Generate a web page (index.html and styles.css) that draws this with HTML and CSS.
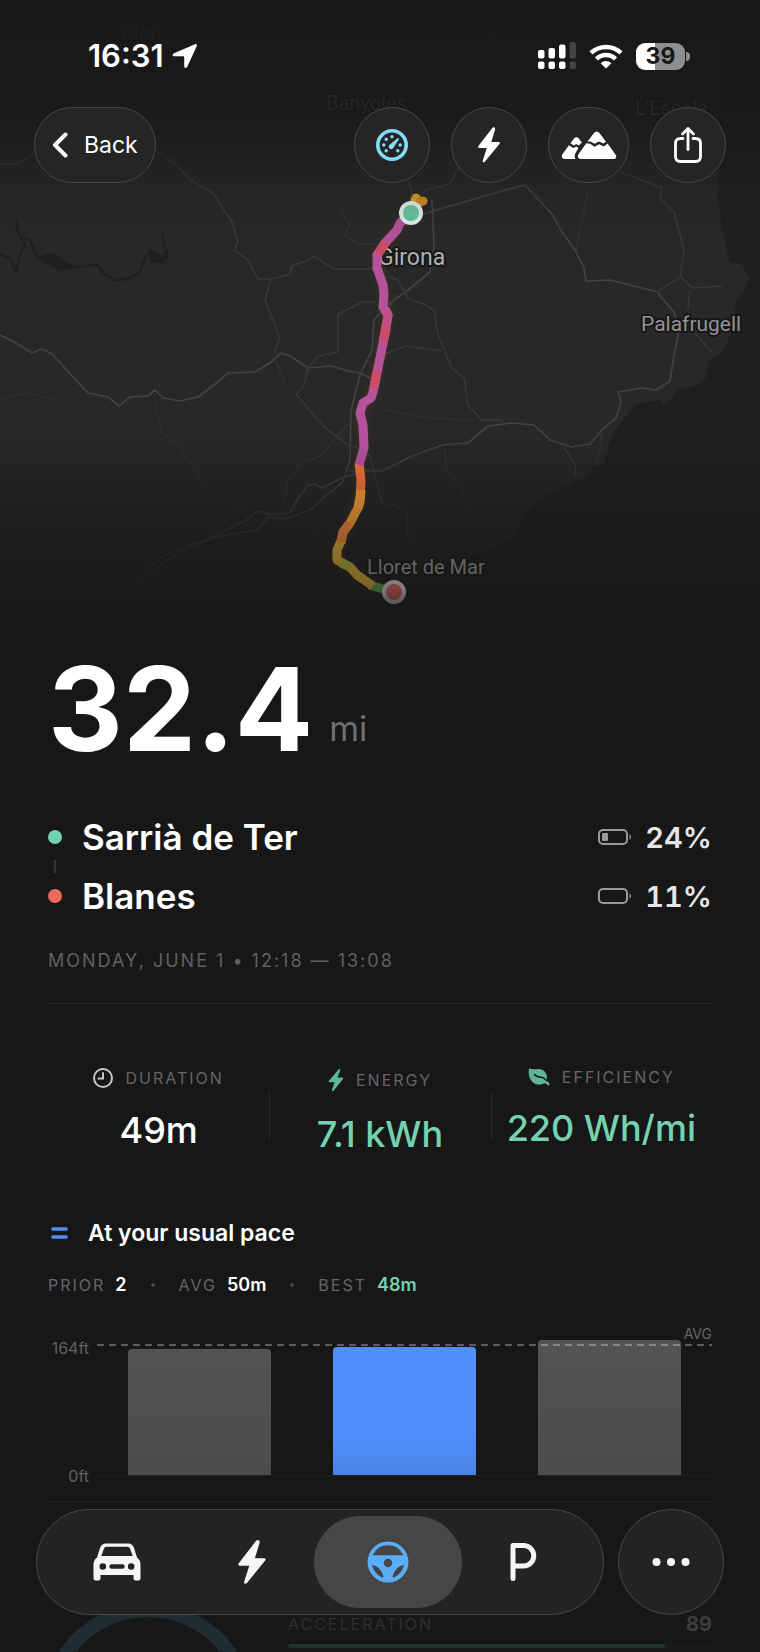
FILE: index.html
```html
<!DOCTYPE html>
<html lang="en">
<head>
  <meta charset="UTF-8">
  <meta name="viewport" content="width=device-width, initial-scale=1.0">
  <title>Drive Details</title>
  <link rel="stylesheet" href="styles.css">
</head>
<body>
  <svg class="map" viewBox="0 0 760 640" preserveAspectRatio="xMidYMin slice" role="img" aria-label="Route map">
    <defs>
      <linearGradient id="fade" x1="0" y1="0" x2="0" y2="1">
        <stop offset="0" stop-color="#181818" stop-opacity="0.97"/>
        <stop offset="0.17" stop-color="#181818" stop-opacity="0.9"/>
        <stop offset="0.24" stop-color="#181818" stop-opacity="0.55"/>
        <stop offset="0.3" stop-color="#181818" stop-opacity="0.15"/>
        <stop offset="0.38" stop-color="#181818" stop-opacity="0"/>
        <stop offset="0.68" stop-color="#171717" stop-opacity="0"/>
        <stop offset="0.92" stop-color="#171717" stop-opacity="0.45"/>
        <stop offset="0.97" stop-color="#171717" stop-opacity="0.9"/>
        <stop offset="1" stop-color="#171717" stop-opacity="1"/>
      </linearGradient>
      <linearGradient id="landFade" x1="0" y1="0" x2="0" y2="1">
        <stop offset="0.68" stop-color="#191919" stop-opacity="0"/>
        <stop offset="0.9" stop-color="#191919" stop-opacity="0.75"/>
        <stop offset="1" stop-color="#171717" stop-opacity="1"/>
      </linearGradient>
      <filter id="glow" x="-50%" y="-20%" width="200%" height="140%">
        <feGaussianBlur stdDeviation="5"/>
      </filter>
    </defs>
    <rect width="760" height="640" fill="#282828"/>
    <!-- sea -->
    <path fill="#1f1f1f" d="M722 0L718 200L722 230L730 262L742 264L749 278L744 292L734 304L736 318L730 336L724 350L708 362L706 378L694 386L678 390L670 400L665 406L660 400L640 403L634 406L622 422L612 434L608 448L604 464L592 468L590 476L578 480L560 490L538 500L524 516L516 532L502 544L490 550L470 558L445 566L415 580L400 592L375 610L340 640H760V0Z"/>
    <!-- reservoir -->
    <g fill="none" stroke="#1f1f1f" stroke-width="2.400" stroke-linejoin="round">
      <path d="M0 254L10 258L16 272L21 252L25 245L18 232L16 220M19 236L30 240L36 255L46 262L78 267L97 265L105 275L115 280L128 279L140 272L146 256L152 250L158 256L168 258L164 242L162 232"/>
      <path fill="#1f1f1f" stroke-width="1" d="M38 257L52 253L66 262L78 267L60 271Z"/>
      <path fill="#1f1f1f" stroke-width="1" d="M148 251L158 256L168 251L163 263L152 262Z"/>
    </g>
    <g fill="none" stroke="#424242" stroke-width="1.700" stroke-linejoin="round">
      <path d="M0 335L16 343L32 353L42 349L52 354L74 378L84 389L88 393L108 397L119 406L130 397L148 396L155 390L163 398L180 401L198 397L214 385L228 373L255 372L270 363L281 353L290 356L308 368L332 366L348 371L360 373L372 379"/>
      <path d="M115 602L160 558L180 548L206 540L246 520L258 511L270 514L290 513L298 498L308 485L315 484L322 488L342 478L366 470L382 471L412 456L443 445L468 443L488 426L512 423L534 425L550 440L572 447L590 444L602 430L616 418L621 402L618 392L642 388L656 390L670 381L674 355L679 330L674 312L660 296L658 292L610 280L586 281L584 268L575 250L562 232L552 214L525 185L505 190L440 209L408 219"/>
      <path d="M115 606L162 564L180 551L216 537L257 530L269 517L285 519L310 510L328 494L342 483L350 460L351 410L360 375L372 350L374 320L386 306L408 290L430 272L434 245L432 200"/>
    </g>
    <g fill="none" stroke="#383838" stroke-width="1.600" stroke-linejoin="round">
      <path d="M0 164H18L40 148M152 148L176 164L190 180L212 192L232 222L238 242L234 250L248 260L258 279H271L265 300L272 318L280 338L275 352"/>
      <path d="M271 279L290 274L292 266L306 261L314 256L334 269H378M308 368L318 356L338 352V314L362 302H376M308 368L303 388L296 394L324 427L348 445L358 448L370 456L375 475L382 503L398 506L407 514V532L415 550L424 570"/>
      <path d="M348 471H380M408 210L412 190L402 170L408 150M412 204L426 190L450 184L462 162M620 172L652 184L662 188L660 198L674 212L684 250L680 278L664 287L658 292M680 276L692 288L722 286M690 290L688 310M694 332L712 352M564 447L576 466L575 475"/>
      <path d="M388 276L398 280L408 298L425 305L434 310L438 335L452 368L464 378L468 405L482 420H504M385 354L405 346L442 351M396 295L390 306"/>
      <path d="M588 192L576 250M340 210L350 224L345 235L358 244H378M602 430L600 450L596 464" opacity=".6"/>
      <path d="M154 400L162 432L180 448L195 470L202 486L224 496L244 510M276 360L284 384M0 400L10 396L30 393L60 402M384 410L430 418L470 420M445 448L446 468L462 490L470 510M340 565L332 580V595M308 514L318 540" opacity=".5"/>
      <path d="M282 508L288 480L300 464L320 456L350 422M500 0L492 70" opacity=".6"/>
    </g>
    <rect width="760" height="640" fill="url(#landFade)"/>
    <g class="place">
      <text x="121" y="39" font-size="19">Olot</text>
      <text x="326" y="110" font-size="20">Banyoles</text>
      <text x="635" y="115" font-size="20">L'Escala</text>
      <text class="place-near" x="378" y="265" font-size="23">Girona</text>
      <text x="641" y="331" font-size="21">Palafrugell</text>
      <text x="367" y="574" font-size="20">Lloret de Mar</text>
    </g>
    <path class="route-glow" filter="url(#glow)" d="M411 213L397 230L377 255L384 295L388 315L371 398L360 413L364 448L359 465L360 497L341 542L337 560L370 585L394 592"/>
    <g fill="none" stroke-width="9" stroke-linejoin="round">
      <path stroke="#d3a52c" stroke-linecap="round" d="M411 213L416 198"/>
      <path stroke="#dc8427" stroke-linecap="round" d="M420 202L423 201"/>
      <path stroke="#4f9a3e" d="M369 585L394 592"/>
      <path stroke="#c9a035" d="M341 541L337 550V560L350 567L357 575L373 586"/>
      <path stroke="#a3a838" d="M341 563L350 567"/>
      <path stroke="#e0932f" d="M360 497L358 508L350 523L343 532L341 543"/>
      <path stroke="#dc7c36" d="M350 523L343 532L341 542"/>
      <path stroke="#ec7038" d="M359 463L361 480L360 498"/>
      <path stroke="#ec9434" d="M361 490L360 502L358 508"/>
      <path stroke="#b5529a" d="M411 213L400 223L397 230L385 243L377 255V268L383 285L384 295L383 307L388 315L385 333L379 363L373 392L371 398L363 403L360 413L363 425L364 448L359 465"/>
      <path stroke="#c04f84" d="M385 309L388 315L383 343"/>
      <path stroke="#cb4c64" d="M386 242L378 254M386 329L384 338M377 371L374 388"/>
    </g>
    <circle cx="411" cy="213" r="10" fill="#68c8a1" stroke="#e4f3ec" stroke-width="4"/>
    <circle cx="394" cy="592" r="10" fill="#d8605a" stroke="#d5cccc" stroke-width="4"/>
    <rect width="760" height="640" fill="url(#fade)"/>
  </svg>

  <div class="status">
    <div class="status-time">
      <span>16:31</span>
      <svg width="26" height="26" viewBox="0 0 26 26" fill="#fff" aria-hidden="true"><path d="M23 1.2L2 10.2C0 11.2.4 13.2 2.4 13.3H11.2Q12.2 13.3 12.2 14.4V23C12.3 25.2 14.5 25.6 15.4 23.6L24.7 3.2C25.3 1.7 24.5.6 23 1.2Z"/></svg>
    </div>
    <div class="status-icons">
      <svg width="38" height="28" viewBox="0 0 38 28" fill="#fff" aria-hidden="true">
        <rect y="8" width="6.500" height="8.500" rx="2"/><rect x="10.500" y="6" width="6.500" height="10.500" rx="2"/><rect x="21" y="2.500" width="6.500" height="14" rx="2"/><rect x="31.500" y="0" width="6.500" height="16.500" rx="2" fill="#444"/>
        <rect y="19.500" width="6.500" height="7.500" rx="2"/><rect x="10.500" y="19.500" width="6.500" height="7.500" rx="2"/><rect x="21" y="19.500" width="6.500" height="7.500" rx="2"/><rect x="31.500" y="19.500" width="6.500" height="7.500" rx="2" fill="#444"/>
      </svg>
      <svg width="34" height="26" viewBox="0 0 34 26" fill="none" stroke="#fff" stroke-width="4.500" aria-hidden="true">
        <path d="M2 10A21.500 21.500 0 0 1 32 10M7.500 16A13.500 13.500 0 0 1 26.500 16"/>
        <path fill="#fff" stroke="none" d="M17 25.500L11.600 20.200A8 8 0 0 1 22.400 20.200Z"/>
      </svg>
      <div class="phone-battery">39</div>
    </div>
  </div>

  <header class="toolbar">
    <button class="glass back" type="button">
      <svg width="16" height="26" viewBox="0 0 16 26" fill="none" stroke="#fff" stroke-width="4" stroke-linecap="round" stroke-linejoin="round" aria-hidden="true"><path d="M13.500 2.500L3 13L13.500 23.500"/></svg>
      Back
    </button>
    <button class="glass round" type="button" aria-label="Speed">
      <svg width="32" height="32" viewBox="0 0 32 32" aria-hidden="true">
        <circle cx="16" cy="16" r="14.200" fill="none" stroke="#83dcfb" stroke-width="3.600"/>
        <g fill="#83dcfb"><circle cx="16" cy="7.700" r="1.700"/><circle cx="10.200" cy="10.200" r="1.700"/><circle cx="7.800" cy="16" r="1.700"/><circle cx="24.200" cy="16" r="1.700"/><circle cx="10.200" cy="21.800" r="1.700"/><circle cx="21.800" cy="21.800" r="1.700"/>
        <path d="M22.600 9.200Q22 8.800 21.200 9.500L14 15.500A2.500 2.500 0 1 0 17.600 18.500L22.800 10.600Q23.300 9.700 22.600 9.200Z"/></g>
      </svg>
    </button>
    <button class="glass round" type="button" aria-label="Power">
      <svg width="24" height="36" viewBox="0 0 24 36" fill="#fff" aria-hidden="true"><path d="M15.300 1L1.400 19Q.4 20.800 2.200 21H9.800L5.800 33.500C5.200 35.500 7 36 8.100 34.600L22.400 17Q23.700 15.200 21.600 15H14.300L18.100 2.600C18.600.6 16.500-.4 15.300 1Z"/></svg>
    </button>
    <button class="glass round wide" type="button" aria-label="Elevation">
      <svg width="56" height="30" viewBox="0 0 56 30" fill="#fff" aria-hidden="true">
        <path d="M26.500 11.500L33 3Q35.700-.2 38.400 3L45 11.700L42.500 13.600L37.800 11.400L33.500 13.800L29.500 11.500Z"/>
        <path d="M25.300 13.300L29.200 13.800L33.300 16.700L38.200 14.200L42.800 16.600L46.600 13.600L54.500 24.600Q56.800 28.600 52.500 29H19.500Q15.400 28.500 17.600 24Z"/>
        <path d="M9.500 13.300L12.800 8.700Q15.400 5.800 18 8.700L20.900 12.500L17.800 15.500L15.200 14L12.700 15.500Z"/>
        <path d="M8 15.300L12.200 18L15.300 16.600L17.400 17.900L14.800 22.500Q12.800 26 14.500 29H3.300Q-.7 28.500 1.500 24Z"/>
      </svg>
    </button>
    <button class="glass round" type="button" aria-label="Share">
      <svg width="28" height="36" viewBox="0 0 28 36" fill="none" stroke="#fff" stroke-width="2.800" stroke-linecap="round" stroke-linejoin="round" aria-hidden="true"><path d="M9 11.500H6.500Q1.500 11.500 1.500 16.500V29.500Q1.500 34.500 6.500 34.500H21.500Q26.500 34.500 26.500 29.500V16.500Q26.500 11.500 21.500 11.500H19M14 22.500V2M8.500 7L14 1.500L19.500 7"/></svg>
    </button>
  </header>

  <main class="content">
    <h1 class="distance">32.4 <span class="unit">mi</span></h1>

    <div class="stops">
      <div class="stop">
        <span class="dot start"></span>
        <span class="stop-name">Sarrià de Ter</span>
        <svg width="36" height="18" viewBox="0 0 36 18" aria-hidden="true"><rect x="2" y="2" width="28" height="14" rx="4" fill="none" stroke="#9a9a9a" stroke-width="2"/><rect x="5" y="5" width="6" height="8" rx="1" fill="#9a9a9a"/><path d="M32.500 6Q35.500 9 32.500 12Z" fill="#9a9a9a"/></svg>
        <span class="charge">24%</span>
      </div>
      <span class="stop-line"></span>
      <div class="stop">
        <span class="dot end"></span>
        <span class="stop-name">Blanes</span>
        <svg width="36" height="18" viewBox="0 0 36 18" aria-hidden="true"><rect x="2" y="2" width="28" height="14" rx="4" fill="none" stroke="#9a9a9a" stroke-width="2"/><path d="M32.500 6Q35.500 9 32.500 12Z" fill="#9a9a9a"/></svg>
        <span class="charge">11%</span>
      </div>
    </div>

    <p class="date">MONDAY, JUNE 1 • 12:18 — 13:08</p>

    <section class="stats">
      <div class="stat">
        <div class="label">
          <svg width="20" height="24" viewBox="0 0 20 24" fill="none" stroke="#c6c6c6" stroke-width="2" stroke-linecap="round" aria-hidden="true"><circle cx="10" cy="12" r="9"/><path d="M10 7V12.500H5.500"/></svg>
          DURATION
        </div>
        <div class="value">49m</div>
      </div>
      <div class="stat good">
        <div class="label">
          <svg width="16" height="28" viewBox="0 0 16 28" fill="#5fb596" aria-hidden="true"><path d="M10.500 3.500L.8 15Q.2 16.200 1.400 16.300H6.500L4 23.500C3.600 25 5 25.500 5.800 24.400L15 13Q15.800 11.800 14.400 11.600H9.600L12.200 4.500C12.600 3 11.300 2.500 10.500 3.500Z"/></svg>
          ENERGY
        </div>
        <div class="value">7.1 kWh</div>
      </div>
      <div class="stat good">
        <div class="label">
          <svg width="22" height="22" viewBox="0 0 22 22" aria-hidden="true"><path fill="#5fb596" d="M1 2.500Q3.500 3.400 8 3.200Q15.500 2.500 18 7.500Q19.500 10.500 18.400 14.500Q21.500 16.500 21.500 18.500Q21 20 19.500 19Q18.800 17.700 17 17.200Q10 20.500 5 16.500Q-.5 12 1 2.500Z"/><path fill="none" stroke="#171717" stroke-width="1.400" stroke-linecap="round" d="M6.500 8.500Q8.500 11 13 11.300Q16 11.500 18.600 14.600"/></svg>
          EFFICIENCY
        </div>
        <div class="value">220 Wh/mi</div>
      </div>
    </section>

    <section>
      <h2 class="pace">
        <svg width="20" height="14" viewBox="0 0 20 14" stroke="#4f8df6" stroke-width="3.600" stroke-linecap="round" aria-hidden="true"><path d="M5 3H18M5 11H18"/></svg>
        At your usual pace
      </h2>
      <div class="history">
        <span class="label">PRIOR</span><b>2</b>
        <i></i>
        <span class="label">AVG</span><b>50m</b>
        <i></i>
        <span class="label">BEST</span><b class="best">48m</b>
      </div>

      <div class="chart">
        <div class="axis"><span>164ft</span><span>0ft</span></div>
        <div class="plot">
          <div class="bar" style="height: 93%"></div>
          <div class="bar current" style="height: 95%"></div>
          <div class="bar" style="height: 100%"></div>
          <svg class="average" width="100%" height="2" aria-hidden="true"><line x1="0" y1="1" x2="100%" y2="1" stroke="#fff" stroke-opacity=".3" stroke-width="2" stroke-dasharray="7 5"/></svg>
          <span class="average-label">AVG</span>
        </div>
      </div>
    </section>

    <section class="score">
      <svg width="200" height="200" viewBox="0 0 200 200" aria-hidden="true"><circle cx="100" cy="106" r="99" fill="none" stroke="#1f2c31" stroke-width="14"/></svg>
      <div class="metric">
        <div class="metric-head"><span>ACCELERATION</span><b>89</b></div>
        <div class="track"><div class="track-fill" style="width: 89%"></div></div>
      </div>
    </section>
  </main>

  <nav class="tabs">
    <div class="glass tab-group">
      <button class="tab" type="button" aria-label="Car">
        <svg width="48" height="38" viewBox="0 0 48 38" aria-hidden="true">
          <path fill="#f5f5f5" fill-rule="evenodd" d="M13 .5H35Q39.500.5 41 5L44 14.500Q47.500 17 47.500 21.500V35.500Q47.500 37.500 45.500 37.500H42.500Q40.500 37.500 40.500 35.500V32H7.500V35.500Q7.500 37.500 5.500 37.500H2.500Q.5 37.500.5 35.500V21.500Q.5 17 4 14.500L7 5Q8.500.5 13 .5ZM13.500 3.800Q11.500 3.800 11 5.500L8.300 13H39.700L37 5.500Q36.500 3.800 34.500 3.800ZM9.800 20.200A3.300 3.300 0 1 0 9.800 26.800A3.300 3.300 0 1 0 9.800 20.200ZM38.200 20.200A3.300 3.300 0 1 0 38.200 26.800A3.300 3.300 0 1 0 38.200 20.200ZM18.500 21.300A2.200 2.200 0 0 0 18.500 25.700H29.500A2.200 2.200 0 0 0 29.500 21.300Z"/>
        </svg>
      </button>
      <button class="tab" type="button" aria-label="Charging">
        <svg width="30" height="46" viewBox="0 0 24 36" fill="#f5f5f5" aria-hidden="true"><path d="M15.300 1L1.400 19Q.4 20.800 2.200 21H9.800L5.800 33.500C5.200 35.500 7 36 8.100 34.600L22.400 17Q23.700 15.200 21.600 15H14.300L18.100 2.600C18.600.6 16.500-.4 15.300 1Z"/></svg>
      </button>
      <button class="tab active" type="button" aria-label="Drives" aria-current="page">
        <svg width="42" height="42" viewBox="0 0 42 42" aria-hidden="true">
          <circle cx="21" cy="21" r="20.500" fill="#5aaef8"/>
          <path fill="#464646" d="M6 13.500A16.800 16.800 0 0 1 36 13.500Q36 14.300 35 14.300H7Q6 14.300 6 13.500ZM5 24Q13 24.500 16.500 35.500Q16.500 37 14.500 36.300Q7 32.500 5 24ZM37 24Q29 24.500 25.500 35.500Q25.500 37 27.500 36.300Q35 32.500 37 24Z"/>
          <circle cx="21" cy="22" r="4.200" fill="#464646"/>
        </svg>
      </button>
      <button class="tab" type="button" aria-label="Parking">
        <svg width="28" height="40" viewBox="0 0 28 40" fill="none" stroke="#f5f5f5" stroke-width="5" stroke-linecap="round" stroke-linejoin="round" aria-hidden="true"><path d="M4 36.500V3.500H14.500A10 10 0 0 1 14.500 24H5"/></svg>
      </button>
    </div>
    <button class="glass more" type="button" aria-label="More">
      <svg width="38" height="8" viewBox="0 0 38 8" fill="#f5f5f5" aria-hidden="true"><circle cx="4.500" cy="4" r="4"/><circle cx="19" cy="4" r="4"/><circle cx="33.500" cy="4" r="4"/></svg>
    </button>
  </nav>
</body>
</html>
```
FILE: styles.css
```css
* {
  box-sizing: border-box;
}

body {
  position: relative;
  height: 100vh;
  margin: 0;
  overflow: hidden;
  background-color: #171717;
  color: #fff;
  font-family: Inter, "Liberation Sans", sans-serif;
}

button {
  border: none;
  padding: 0;
  background: none;
  color: #fff;
  font: inherit;
  cursor: pointer;
}

h1, h2, p {
  margin: 0;
}

svg {
  flex: none;
}

.map {
  position: absolute;
  top: 0;
  left: 0;
  width: 100%;
  height: 640px;
  z-index: -1;
}

.place {
  font-family: Roboto, sans-serif;
  fill: #929292;
  stroke: #171717;
  stroke-width: 4px;
  stroke-linejoin: round;
  paint-order: stroke;
}

.place-near {
  fill: #b0b0b0;
}

.route-glow {
  fill: none;
  stroke: #c8791e;
  stroke-width: 8px;
  opacity: 0.15;
}

.glass {
  display: flex;
  align-items: center;
  justify-content: center;
  border: 1px solid #474747;
  background-color: #252525;
}

/* status bar */

.status {
  display: flex;
  justify-content: space-between;
  align-items: center;
  height: 40px;
  margin-top: 36px;
  padding: 0 69px 0 88px;
}

.status-time {
  display: flex;
  align-items: center;
  gap: 8px;
  font-size: 31px;
  font-weight: 600;
  line-height: 28px;
}

.status-icons {
  display: flex;
  align-items: center;
  gap: 13px;
}

.phone-battery {
  position: relative;
  width: 49px;
  height: 27px;
  margin-right: 6px;
  border-radius: 9px;
  background: linear-gradient(90deg, #fff 39%, #8e8e8e 39%);
  color: #171717;
  font-size: 23px;
  font-weight: 700;
  line-height: 27px;
  text-align: center;
}

.phone-battery::after {
  content: "";
  position: absolute;
  top: 9px;
  right: -5px;
  width: 4px;
  height: 9px;
  border-radius: 0 4px 4px 0;
  background-color: #8e8e8e;
}

/* toolbar */

.toolbar {
  display: flex;
  gap: 21px;
  margin-top: 31px;
  padding: 0 34px;
}

.toolbar .glass {
  height: 76px;
  border-radius: 38px;
}

.back {
  gap: 16px;
  margin-right: auto;
  padding: 0 17px;
  font-size: 23px;
}

.round {
  width: 76px;
}

.wide {
  width: 81px;
}

/* trip summary */

.content {
  padding: 466px 48px 0;
}

.distance {
  display: flex;
  align-items: flex-end;
  gap: 16px;
  font-size: 116px;
  font-weight: 700;
  line-height: 120px;
}

.unit {
  margin-bottom: 20px;
  color: #6f6f6f;
  font-size: 34px;
  font-weight: 400;
  line-height: 40px;
}

.stops {
  display: grid;
  gap: 1px;
  margin-top: 46px;
}

.stop {
  display: flex;
  align-items: center;
  height: 44px;
}

.dot {
  width: 14px;
  height: 14px;
  border-radius: 50%;
}

.start {
  background-color: #72d3b1;
}

.end {
  background-color: #ea6b5b;
}

.stop-line {
  width: 2px;
  height: 13px;
  margin-left: 6px;
  background-color: #333;
}

.stop-name {
  margin: 0 auto 0 20px;
  font-size: 35px;
  font-weight: 600;
}

.charge {
  margin-left: 12px;
  color: #e6e6e6;
  font-size: 29px;
  font-weight: 600;
  font-variant-numeric: tabular-nums;
}

.date {
  margin-top: 31px;
  padding-bottom: 30px;
  border-bottom: 1px solid #272727;
  color: #606060;
  font-size: 18px;
  line-height: 24px;
  letter-spacing: 2px;
}

.label {
  display: flex;
  align-items: center;
  color: #656565;
  font-size: 16px;
  line-height: 22px;
  letter-spacing: 2px;
}

.stats {
  display: grid;
  grid-template-columns: repeat(3, 1fr);
  margin-top: 62px;
}

.stat {
  position: relative;
  display: flex;
  flex-direction: column;
  align-items: center;
  gap: 18px;
}

.stat + .stat::before {
  content: "";
  position: absolute;
  top: 25px;
  left: 0;
  width: 1px;
  height: 48px;
  background-color: #2a2a2a;
}

.stat .label {
  gap: 12px;
}

.value {
  font-size: 36px;
  font-weight: 500;
  line-height: 44px;
}

.good .value,
.best {
  color: #74d2b1;
}

/* pace */

.pace {
  display: flex;
  align-items: center;
  gap: 20px;
  margin-top: 61px;
  font-size: 23px;
  font-weight: 600;
  line-height: 32px;
}

.history {
  display: flex;
  align-items: center;
  gap: 10px;
  margin-top: 24px;
  font-size: 18px;
  line-height: 24px;
}

.history b {
  font-weight: 600;
}

.history i {
  width: 4px;
  height: 4px;
  margin: 0 14px;
  border-radius: 50%;
  background-color: #444;
}

.chart {
  display: flex;
  gap: 8px;
  margin-top: 43px;
  padding-bottom: 17px;
  border-bottom: 1px solid #222;
}

.axis {
  display: flex;
  flex-direction: column;
  justify-content: space-between;
  width: 41px;
  height: 144px;
  color: #606060;
  font-size: 16px;
  line-height: 16px;
  text-align: right;
}

.plot {
  position: relative;
  display: grid;
  grid-template-columns: repeat(3, 1fr);
  align-items: end;
  justify-items: center;
  flex: 1;
  height: 136px;
  border-bottom: 1px solid #1f1f1f;
}

.bar {
  width: 70%;
  border-radius: 4px 4px 0 0;
  background: linear-gradient(#535353, #4c4c4c);
}

.current {
  background: linear-gradient(#4f8ff9 70%, #4a83e4);
}

.average {
  position: absolute;
  top: 4px;
  left: 0;
}

.average-label {
  position: absolute;
  top: -14px;
  right: 0;
  color: #666;
  font-size: 14px;
  line-height: 16px;
}

/* driving score */

.score {
  display: flex;
  gap: 40px;
  margin-top: 101px;
}

.metric {
  flex: 1;
  padding-top: 9px;
}

.metric-head {
  display: flex;
  justify-content: space-between;
  align-items: center;
  color: #2e2e2e;
  font-size: 16px;
  line-height: 24px;
  letter-spacing: 2px;
}

.metric-head b {
  color: #3d3d3d;
  font-size: 20px;
  letter-spacing: 0;
}

.track {
  height: 4px;
  margin-top: 8px;
  border-radius: 2px;
  background-color: #1a1a1a;
}

.track-fill {
  height: 4px;
  border-radius: 2px;
  background-color: #20332c;
}

/* bottom tabs */

.tabs {
  position: fixed;
  right: 36px;
  bottom: 37px;
  left: 36px;
  display: flex;
  gap: 14px;
}

.tab-group {
  flex: 1;
  height: 106px;
  padding: 0 12px;
  border-radius: 53px;
  background-color: #232323;
}

.tab {
  display: flex;
  flex: 1;
  align-items: center;
  justify-content: center;
  height: 92px;
}

.active {
  margin: 0 -6px;
  padding: 0 6px;
  border-radius: 46px;
  background-color: #464646;
}

.more {
  width: 106px;
  height: 106px;
  border: 1px solid #474747;
  border-radius: 50%;
  background-color: #232323;
}
```
